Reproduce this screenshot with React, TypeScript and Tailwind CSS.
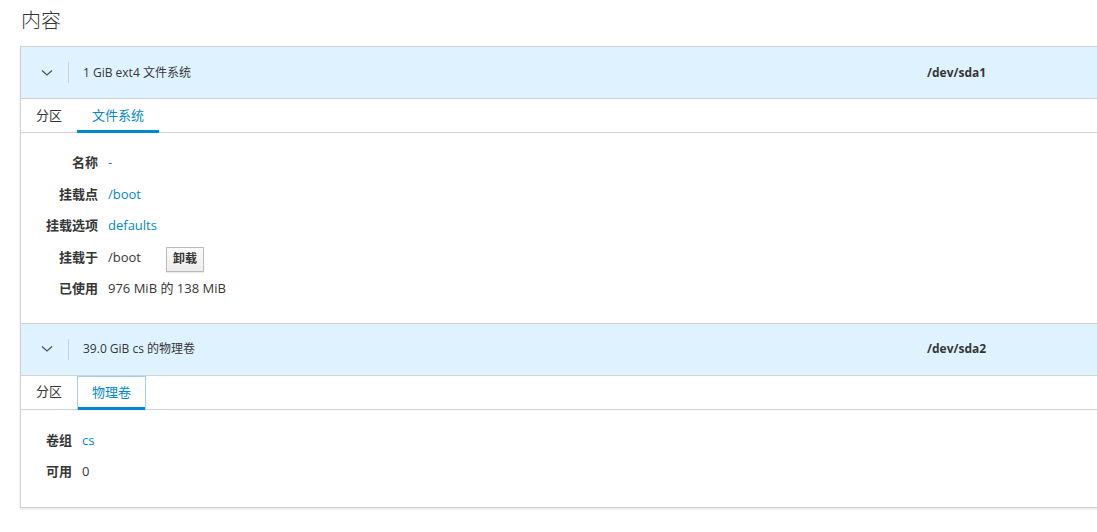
import React from "react";

const font = { fontFamily: '"Open Sans", "Noto Sans CJK SC", sans-serif' };

function Chevron() {
  return (
    <svg width="12" height="8" viewBox="0 0 12 8" className="block">
      <polyline points="1,1.5 6,6 11,1.5" fill="none" stroke="#4d5258" strokeWidth="1.3" />
    </svg>
  );
}

type Row = { label: string; value: React.ReactNode };

function Panel({
  title,
  dev,
  tab2,
  focused,
  labelW,
  rows,
  first,
  pad,
}: {
  title: string;
  dev: string;
  tab2: string;
  focused?: boolean;
  labelW: string;
  rows: Row[];
  first?: boolean;
  pad: string;
}) {
  return (
    <div className={first ? "" : "border-t border-[#d1d1d1]"}>
      <div className="h-[52px] bg-[#def3ff] border-b border-[#d1d1d1] flex items-center">
        <div className="pl-[20px] w-[47px]">
          <Chevron />
        </div>
        <div className="w-px h-[21px] bg-[#d1d1d1]" />
        <div className="flex-1 pl-[14px] text-[12px] text-[#363636]">{title}</div>
        <div className="w-[202px] text-[12px] font-bold text-[#363636]">{dev}</div>
      </div>
      <div className="h-[34px] border-b border-[#d1d1d1] flex items-stretch text-[13px]">
        <div className="px-[15px] flex items-center text-[#363636]">分区</div>
        <div
          className={
            "relative flex items-center text-[#0088ce] " +
            (focused ? "border border-[#9fd0ee] border-b-0 px-[14px]" : "px-[15px]")
          }
        >
          {tab2}
          <div className="absolute left-0 right-0 bottom-[-1px] h-[3px] bg-[#0088ce]" />
        </div>
      </div>
      <div className={"text-[13px] text-[#363636] " + pad}>
        {rows.map((r, i) => (
          <div key={i} className="h-[31.5px] flex items-center">
            <div className={labelW + " text-right font-semibold pr-[10px]"}>{r.label}</div>
            <div className="flex items-center">{r.value}</div>
          </div>
        ))}
      </div>
    </div>
  );
}

export default function App() {
  return (
    <div className="w-[1097px] h-[532px] overflow-hidden bg-white" style={font}>
      <div className="h-[46px] pl-[21px] pt-[7px] text-[20px] leading-[28px] font-light text-[#363636]">
        内容
      </div>
      <div className="ml-[20px] w-[1110px] border border-[#d1d1d1] shadow-[0_1px_2px_rgba(0,0,0,0.12)]">
        <Panel
          first
          title="1 GiB ext4 文件系统"
          dev="/dev/sda1"
          tab2="文件系统"
          labelW="w-[87px]"
          pad="pt-[14px] pb-[18px]"
          rows={[
            { label: "名称", value: <span className="text-[#0088ce]">-</span> },
            { label: "挂载点", value: <span className="text-[#0088ce]">/boot</span> },
            { label: "挂载选项", value: <span className="text-[#0088ce]">defaults</span> },
            {
              label: "挂载于",
              value: (
                <>
                  <span>/boot</span>
                  <button className="ml-[25px] mt-[4px] h-[25px] w-[38px] text-[12px] font-semibold text-[#363636] border border-[#bbbbbb] bg-gradient-to-b from-[#fafafa] to-[#ededed] shadow-[0_1px_1px_rgba(0,0,0,0.08)]">
                    卸载
                  </button>
                </>
              ),
            },
            { label: "已使用", value: <span>976 MiB 的 138 MiB</span> },
          ]}
        />
        <Panel
          title="39.0 GiB cs 的物理卷"
          dev="/dev/sda2"
          tab2="物理卷"
          focused
          labelW="w-[61px]"
          pad="pt-[15px] pb-[19px]"
          rows={[
            { label: "卷组", value: <span className="text-[#0088ce]">cs</span> },
            { label: "可用", value: <span>0</span> },
          ]}
        />
      </div>
    </div>
  );
}
